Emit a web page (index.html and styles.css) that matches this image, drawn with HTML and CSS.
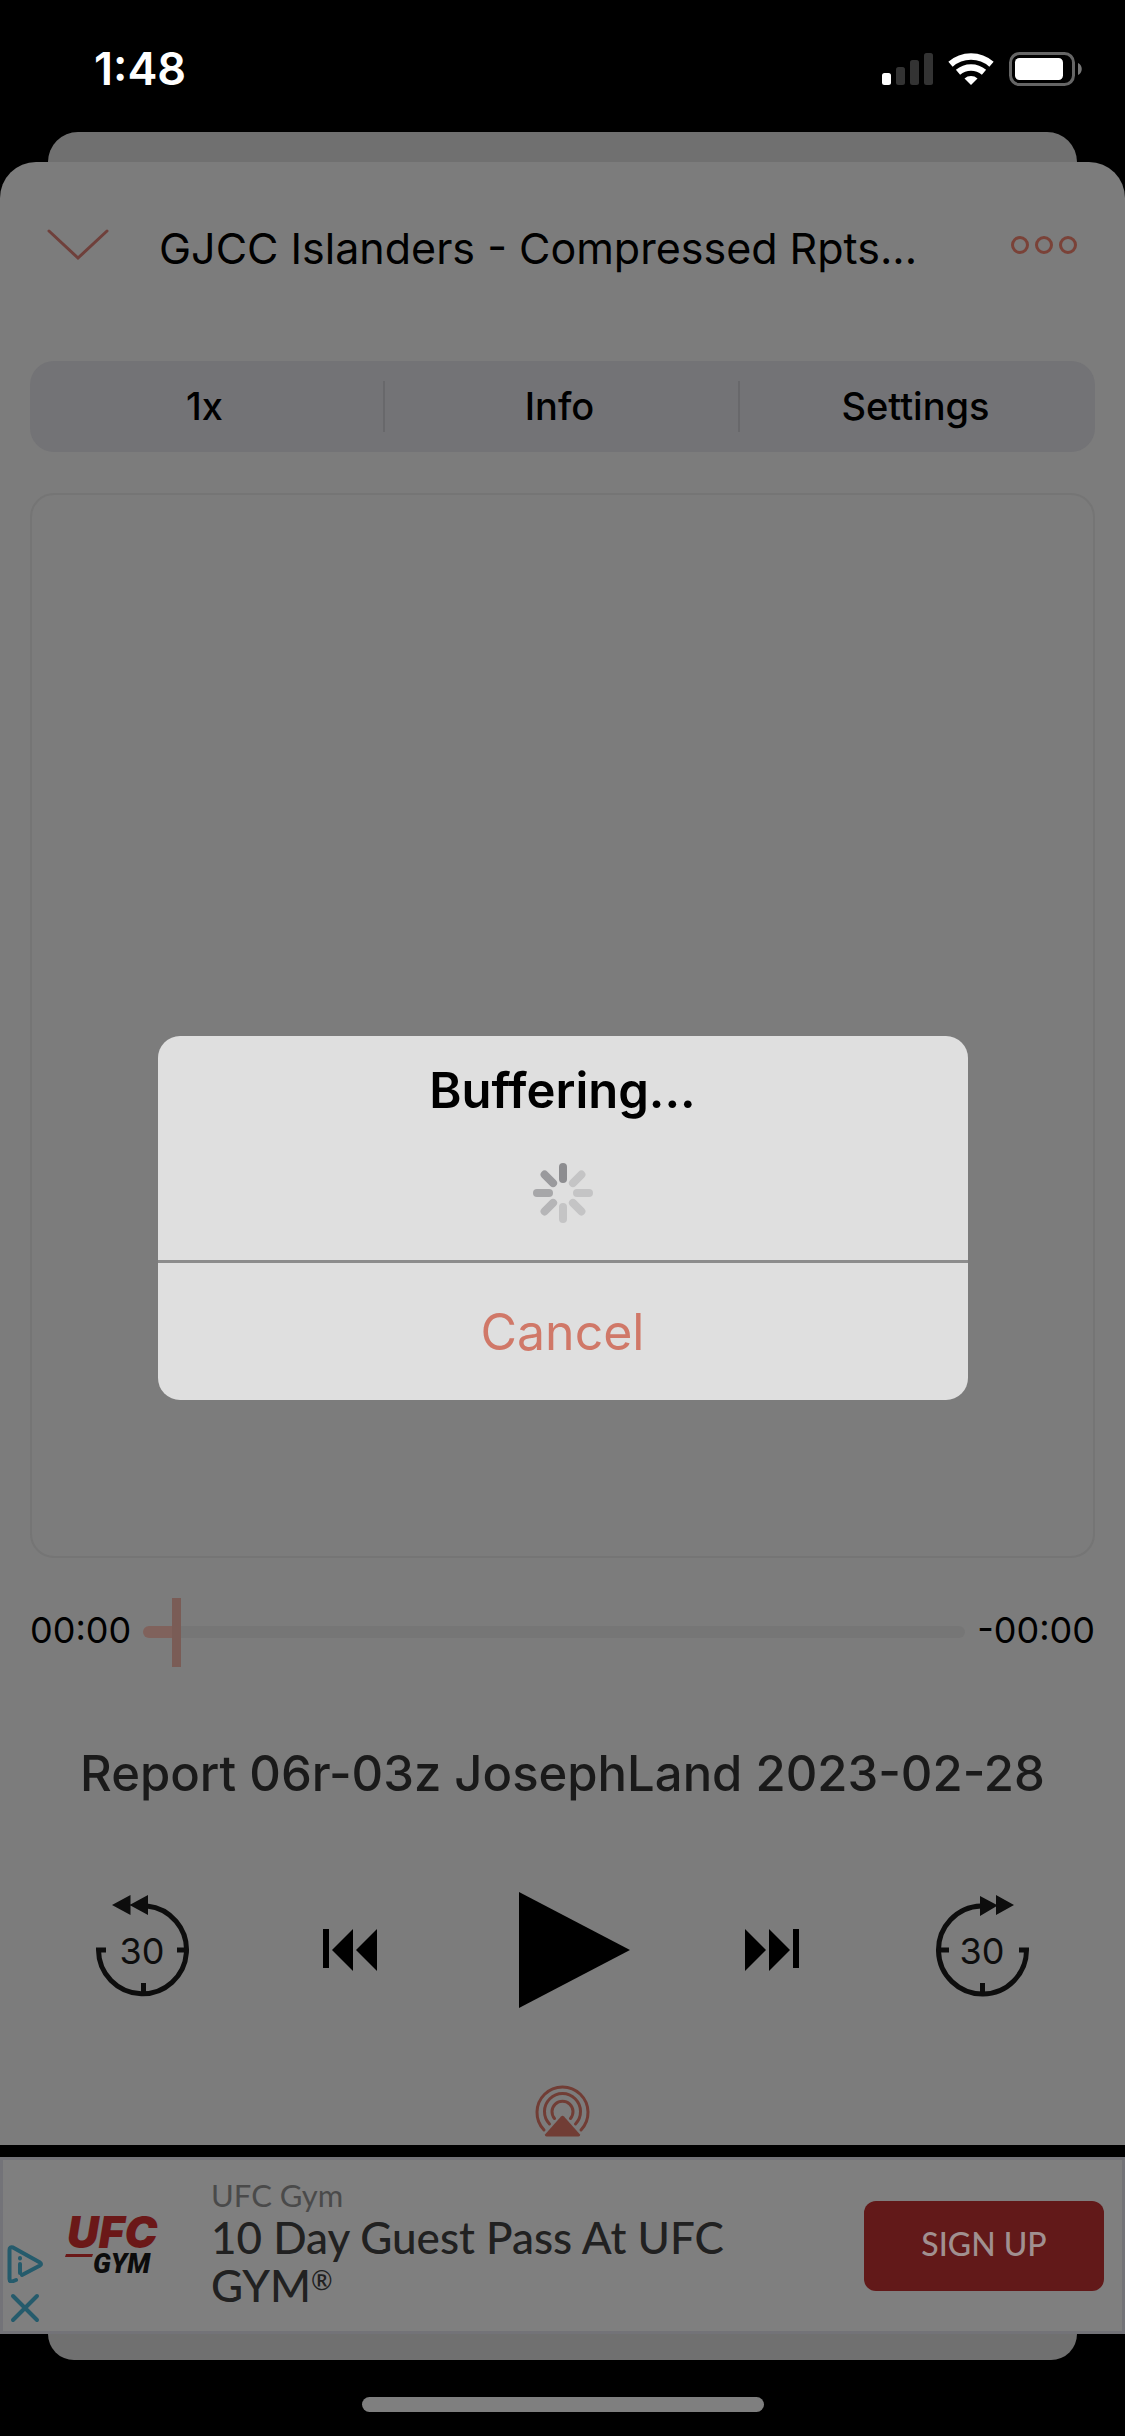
FILE: index.html
```html
<!DOCTYPE html>
<html lang="en">
<head>
<meta charset="utf-8">
<meta name="viewport" content="width=device-width, initial-scale=1">
<title>Podcast player</title>
<link rel="stylesheet" href="styles.css">
</head>
<body>
<div class="screen">
  <header class="status">
    <time class="clock">1:48</time>
    <svg class="status-icons" width="201" height="34" viewBox="0 0 201 34" aria-hidden="true">
      <rect x="0" y="21" width="9" height="12" rx="2.5" fill="#fff"/>
      <g fill="#333"><rect x="14" y="15" width="9" height="18" rx="2.5"/><rect x="28" y="8" width="9" height="25" rx="2.5"/><rect x="42" y="1" width="9" height="32" rx="2.5"/></g>
      <g fill="none" stroke="#fff" stroke-width="6.5"><path d="M68.500 12.300a31 31 0 0 1 41 0"/><path d="M76 20.300a20 20 0 0 1 26 0"/></g>
      <path d="M89 33l-6.500-6.500a10 10 0 0 1 13 0z" fill="#fff"/>
      <rect x="128.500" y="1.500" width="63" height="31" rx="9" fill="none" stroke="#666" stroke-width="3"/>
      <rect x="133" y="6" width="48" height="22" rx="4.500" fill="#fff"/>
      <path d="M196 11c5 2 5 10 0 12z" fill="#777"/>
    </svg>
  </header>

  <div class="lip lip-top"></div>

  <main class="sheet">
    <div class="titlebar">
      <button class="plain" aria-label="Close player">
        <svg width="62" height="34" viewBox="0 0 62 34" fill="none" stroke="#6f403b" stroke-width="3" stroke-linecap="round"><path d="M2 3l29 27L60 3"/></svg>
      </button>
      <h1 class="show">GJCC Islanders - Compressed Rpts...</h1>
      <button class="plain" aria-label="More">
        <svg width="68" height="20" viewBox="0 0 68 20" fill="none" stroke="#7a4238" stroke-width="3"><circle cx="10" cy="10" r="7.500"/><circle cx="34" cy="10" r="7.500"/><circle cx="58" cy="10" r="7.500"/></svg>
      </button>
    </div>

    <div class="segments">
      <button class="segment">1x</button>
      <button class="segment">Info</button>
      <button class="segment">Settings</button>
    </div>

    <div class="artwork"></div>

    <div class="progress">
      <label class="time" for="position">00:00</label>
      <input class="slider" id="position" type="range" min="0" max="1000" value="36">
      <span class="time">-00:00</span>
    </div>

    <h2 class="episode">Report 06r-03z JosephLand 2023-02-28</h2>

    <div class="controls">
      <button class="plain skip" aria-label="Back 30 seconds">
        <svg width="94" height="104" viewBox="0 0 94 104">
          <g fill="none" stroke="#0d0d0d" stroke-width="5"><path d="M51 12A44 44 0 1 1 2.500 56H10"/><path d="M91 56H81M47.500 100V89"/></g>
          <path fill="#0d0d0d" d="M52 1v20L34.500 11.500V21L16 11 34.500 1v9.500z"/>
          <text class="skip-label" x="46" y="70">30</text>
        </svg>
      </button>
      <button class="plain" aria-label="Previous">
        <svg width="105" height="42" viewBox="0 0 105 42"><path d="M33 0h6v39h-6zM63 0v42L42 21zM87 0v42L66 21z"/></svg>
      </button>
      <button class="plain" aria-label="Play">
        <svg width="135" height="116" viewBox="0 0 135 116"><path d="M24 0l111 58L24 116z"/></svg>
      </button>
      <button class="plain" aria-label="Next">
        <svg width="105" height="42" viewBox="0 0 105 42"><path d="M15 0v42l21-21zM39 0v42l21-21zM63 0h6v39h-6z"/></svg>
      </button>
      <button class="plain skip" aria-label="Forward 30 seconds">
        <svg width="94" height="104" viewBox="0 0 94 104">
          <g fill="none" stroke="#0d0d0d" stroke-width="5"><path d="M46 12A44 44 0 1 0 91.500 56H84"/><path d="M3 56h11M47.500 100V89"/></g>
          <path fill="#0d0d0d" d="M45 2v20l16-9.500V21l18-10L61 1v9.500z"/>
          <text class="skip-label" x="47" y="70">30</text>
        </svg>
      </button>
    </div>

    <button class="plain airplay" aria-label="AirPlay">
      <svg width="55" height="53" viewBox="0 0 55 53">
        <g fill="none" stroke="#713d35" stroke-width="3" stroke-linecap="round"><path d="M9 46a25.500 25.500 0 1 1 37 0"/><path d="M14.500 40a18 18 0 1 1 26 0"/><path d="M19.500 34.500a10.500 10.500 0 1 1 16 0"/></g>
        <path fill="#713d35" d="M26 32.500q1.500-1.500 3 0L45 50.500q.5 2-1.500 2h-32q-2 0-1.500-2z"/>
      </svg>
    </button>
  </main>

  <aside class="ad">
    <div class="ad-choices">
      <button class="plain" aria-label="Ad choices">
        <svg width="36" height="38" viewBox="0 0 36 38" fill="none" stroke="#255b6c" stroke-width="4" stroke-linejoin="round" stroke-linecap="round"><path d="M9 35l-4 1.500q-2.500 0-2.500-2.500V5q0-3.500 3.500-2.500L33 17.500q2 1.500 0 3L15 30"/><path d="M13 19v9" stroke-width="4"/><path d="M13 13v.5"/></svg>
      </button>
      <button class="plain" aria-label="Close ad">
        <svg width="36" height="30" viewBox="0 0 36 30" stroke="#255b6c" stroke-width="4" stroke-linecap="round"><path d="M6 3l24 24M30 3L6 27"/></svg>
      </button>
    </div>
    <svg class="logo" width="104" height="84" viewBox="0 0 104 84" role="img" aria-label="UFC Gym logo">
      <text class="logo-ufc" x="2" y="44">UFC</text>
      <path fill="#6b1818" d="M1 50h27l-1 3H0z"/>
      <text class="logo-gym" x="28" y="69">GYM</text>
    </svg>
    <div class="ad-copy">
      <p class="ad-brand">UFC Gym</p>
      <p class="ad-headline">10 Day Guest Pass At UFC GYM<span class="reg">®</span></p>
    </div>
    <a class="ad-cta" href="#">SIGN UP</a>
  </aside>

  <div class="lip lip-bottom"></div>
  <div class="home"></div>
</div>

<div class="overlay">
  <section class="alert" role="alertdialog" aria-labelledby="alert-title">
    <h2 class="alert-title" id="alert-title">Buffering...</h2>
    <svg class="spinner" width="60" height="60" viewBox="-30 -30 60 60" stroke-width="8" stroke-linecap="round" aria-hidden="true">
      <path stroke="#8d8d90" d="M0-26v12"/>
      <path stroke="#c4c4c5" d="M18.400-18.400L9.900-9.900M14 0h12M9.900 9.900l8.500 8.500M0 14v12"/>
      <path stroke="#b5b5b7" d="M-9.900 9.900l-8.500 8.500"/>
      <path stroke="#a7a7a9" d="M-14 0h-12"/>
      <path stroke="#9a9a9d" d="M-9.900-9.900l-8.500-8.500"/>
    </svg>
    <button class="cancel">Cancel</button>
  </section>
</div>
</body>
</html>
```
FILE: styles.css
```css
* { box-sizing: border-box; }

body {
  margin: 0;
  background: #000;
  color: #000;
  font-family: Inter, "Liberation Sans", sans-serif;
}

h1, h2, p { margin: 0; font-weight: 400; }
svg { display: block; }

button {
  margin: 0;
  padding: 0;
  border: 0;
  background: none;
  color: inherit;
  font: inherit;
}

.plain { display: block; }

.screen {
  display: flex;
  flex-direction: column;
  min-height: 100vh;
}

/* Status bar */
.status {
  display: flex;
  justify-content: space-between;
  align-items: center;
  height: 132px;
  padding: 6px 42px 0 94px;
}
.clock { color: #fff; font-size: 45px; font-weight: 600; line-height: 52px; }

/* Card peeking out behind the sheet */
.lip { margin: 0 48px; background: #707070; }
.lip-top { height: 30px; border-radius: 30px 30px 0 0; }
.lip-bottom { height: 26px; border-radius: 0 0 30px 30px; }

/* Player sheet */
.sheet {
  padding: 0 30px 8px;
  border-radius: 36px 36px 0 0;
  background: #7c7c7c;
}

.titlebar {
  display: flex;
  align-items: center;
  height: 199px;
  padding: 0 17px;
}
.titlebar .plain { margin-bottom: 34px; }
.show {
  flex: 1;
  padding: 0 50px;
  margin-bottom: 28px;
  font-size: 43px;
  line-height: 56px;
  white-space: nowrap;
}

.segments {
  display: grid;
  grid-template-columns: repeat(3, 1fr);
  padding: 20px 0;
  border-radius: 24px;
  background: #737376;
}
.segment { height: 51px; font-size: 38px; font-weight: 500; line-height: 51px; }
.segment:not(:last-child) { padding-right: 4px; border-right: 2px solid #68686b; }
.segment:last-child { padding-right: 4px; }

.artwork {
  margin-top: 41px;
  aspect-ratio: 1;
  border: 2px solid #757575;
  border-radius: 24px;
}

.progress {
  display: flex;
  align-items: center;
  gap: 12px;
  margin-top: 39px;
  font-size: 36px;
  line-height: 44px;
}
.time { padding-bottom: 4px; }

.slider {
  flex: 1;
  min-width: 0;
  height: 69px;
  margin: 0;
  appearance: none;
  background: none;
}
.slider::-webkit-slider-runnable-track {
  height: 12px;
  border-radius: 6px;
  background: linear-gradient(90deg, #80625c 4%, #767676 4%);
}
.slider::-webkit-slider-thumb {
  appearance: none;
  width: 9px;
  height: 69px;
  margin-top: -28px;
  background: #7a5c56;
}

.episode {
  margin-top: 77px;
  color: #1a1a1a;
  font-size: 49px;
  font-weight: 500;
  line-height: 62px;
  text-align: center;
  white-space: nowrap;
}

.controls {
  display: flex;
  justify-content: space-between;
  align-items: center;
  margin-top: 87px;
  padding: 0 66px;
}
.skip { padding-bottom: 8px; }
.skip-label { fill: #0d0d0d; font-size: 36px; text-anchor: middle; }

.airplay { margin: 76px auto 0; }

/* Banner ad */
.ad {
  display: flex;
  align-items: center;
  margin-top: 12px;
  min-height: 177px;
  padding-right: 18px;
  border: 3px solid #737378;
  background: #7f7f7f;
}
.ad-choices {
  display: grid;
  gap: 10px;
  align-self: flex-end;
  padding: 0 0 8px 4px;
}
.logo { margin-left: 22px; }
.logo-ufc { fill: #6b1818; font-size: 44px; font-weight: 900; font-style: italic; }
.logo-gym { fill: #0c0c0c; font-family: Roboto, sans-serif; font-size: 27px; font-weight: 900; font-style: italic; }
.ad-copy { flex: 1; padding: 0 40px 6px 42px; font-family: Lato, sans-serif; }
.ad-brand { color: #4a4a4a; font-size: 31px; line-height: 36px; }
.ad-headline { color: #212121; font-size: 44px; font-weight: 500; line-height: 48px; }
.reg { font-size: 26px; line-height: 26px; vertical-align: 12px; }
.ad-cta {
  width: 240px;
  padding-bottom: 4px;
  border-radius: 12px;
  background: #621919;
  color: #a09090;
  font-family: Lato, sans-serif;
  font-size: 32px;
  font-weight: 500;
  line-height: 86px;
  text-align: center;
  text-decoration: none;
}

.home {
  width: 402px;
  height: 15px;
  margin: 37px auto 24px;
  border-radius: 8px;
  background: #7f7f7f;
}

/* Buffering alert */
.overlay {
  position: fixed;
  inset: 0;
  display: grid;
  place-items: center;
}
.alert {
  width: 72%;
  overflow: hidden;
  border-radius: 22px;
  background: #dfdfdf;
  text-align: center;
}
.alert-title { padding-top: 24px; font-size: 49px; font-weight: 600; line-height: 62px; }
.spinner { margin: 41px auto 37px; }
.cancel {
  width: 100%;
  padding-top: 2px;
  border-top: 3px solid #8c8c8c;
  color: #d07868;
  font-size: 50px;
  line-height: 135px;
}
```
